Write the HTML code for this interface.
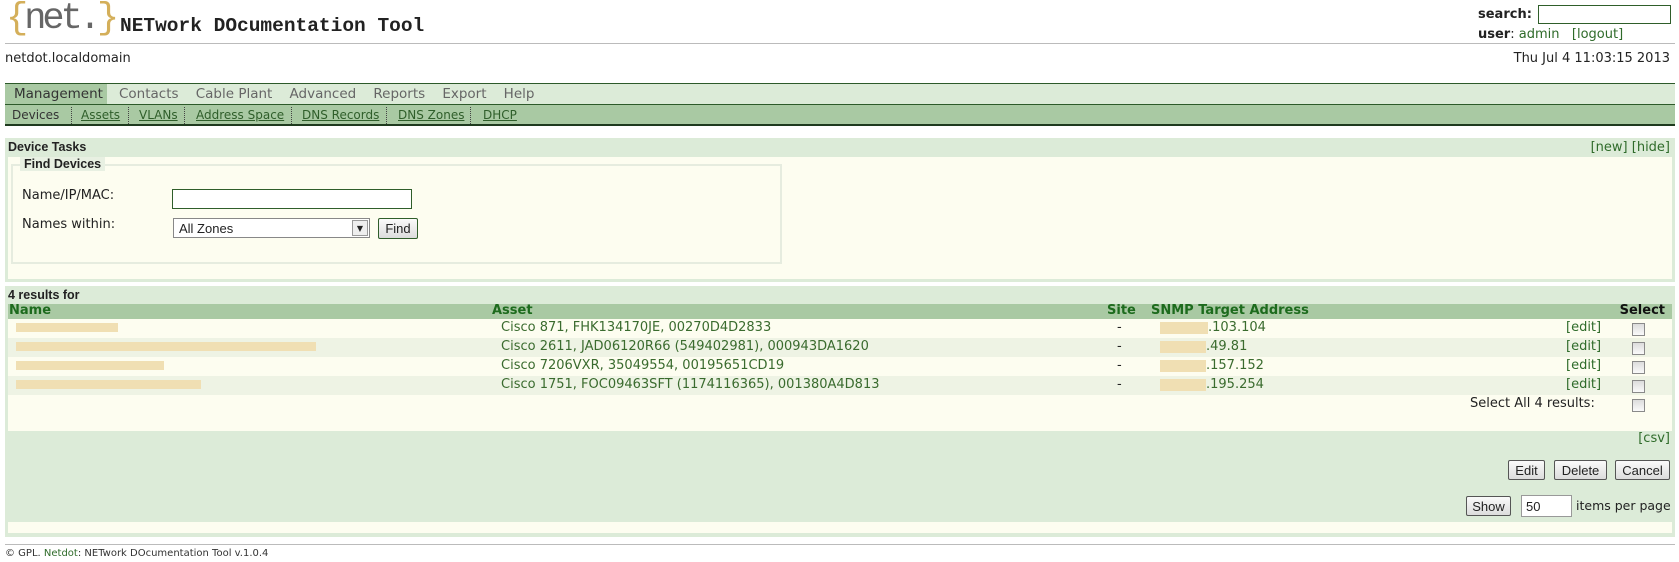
<!DOCTYPE html>
<html><head><meta charset="utf-8"><style>
*{box-sizing:border-box;margin:0;padding:0}
body{width:1679px;height:562px;background:#fff;font-family:"DejaVu Sans",Verdana,sans-serif;font-size:13px;color:#222;position:relative;overflow:hidden}
.a{position:absolute;white-space:nowrap}
.g{color:#3a6b2e}
.lnk{color:#2f6b2a}
.cb{position:absolute;width:13px;height:13px;border:1px solid #8a8a8a;background:linear-gradient(#dcdcdc,#fafafa)}
.btn{position:absolute;border:1px solid #555;border-radius:2px;background:linear-gradient(#fafafa,#dcdcdc);font-family:"Liberation Sans",sans-serif;font-size:13px;text-align:center;line-height:19px}
.blur{position:absolute;background:#f0dfb3;height:9px}
</style></head><body>
<div class="a" style="left:6px;top:-2px;font-family:'Liberation Mono',monospace;font-size:37px;line-height:42px;letter-spacing:-4px;color:#666"><span style="color:#d4af5a">{</span>net.<span style="color:#d4af5a">}</span></div>
<div class="a" style="left:120px;top:15px;font-family:'Liberation Mono',monospace;font-weight:bold;font-size:19.5px;color:#222">NETwork DOcumentation Tool</div>
<div class="a" style="left:1478px;top:7px;font-weight:bold">search:</div>
<div class="a" style="left:1538px;top:5px;width:133px;height:19px;border:1px solid #2f5e2a;background:#fff"></div>
<div class="a" style="left:1478px;top:27px"><b>user</b>: <span class="lnk">admin</span>&nbsp;&nbsp;&nbsp;<span class="lnk">[logout]</span></div>
<div class="a" style="left:5px;top:43px;width:1670px;height:1px;background:#bbb"></div>
<div class="a" style="left:5px;top:51px">netdot.localdomain</div>
<div class="a" style="right:9px;top:51px">Thu Jul 4 11:03:15 2013</div>
<div class="a" style="left:5px;top:83px;width:1670px;height:21px;background:#dcebd8;border-top:1px solid #2d5a2a"></div>
<div class="a" style="left:5px;top:84px;width:102px;height:20px;background:#a9c9a3"></div>
<div class="a" style="left:14px;top:86px;color:#333;font-size:13.5px">Management</div>
<div class="a" style="left:119px;top:86px;color:#666;font-size:13.5px">Contacts&nbsp;&nbsp;&nbsp;&nbsp;Cable Plant&nbsp;&nbsp;&nbsp;&nbsp;Advanced&nbsp;&nbsp;&nbsp;&nbsp;Reports&nbsp;&nbsp;&nbsp;&nbsp;Export&nbsp;&nbsp;&nbsp;&nbsp;Help</div>
<div class="a" style="left:5px;top:104px;width:1670px;height:22px;background:#a9c9a3;border-top:1px solid #2d5a2a;border-bottom:2px solid #1e3a1e"></div>
<div class="a" style="left:12px;top:108px;font-size:12px;color:#333">Devices</div>
<div class="a" style="left:71px;top:107px;width:0;height:17px;border-left:1px dotted #444"></div>
<div class="a" style="left:81px;top:108px;font-size:12px;color:#2f5e2a;text-decoration:underline">Assets</div>
<div class="a" style="left:128px;top:107px;width:0;height:17px;border-left:1px dotted #444"></div>
<div class="a" style="left:139px;top:108px;font-size:12px;color:#2f5e2a;text-decoration:underline">VLANs</div>
<div class="a" style="left:184px;top:107px;width:0;height:17px;border-left:1px dotted #444"></div>
<div class="a" style="left:196px;top:108px;font-size:12px;color:#2f5e2a;text-decoration:underline">Address Space</div>
<div class="a" style="left:291px;top:107px;width:0;height:17px;border-left:1px dotted #444"></div>
<div class="a" style="left:302px;top:108px;font-size:12px;color:#2f5e2a;text-decoration:underline">DNS Records</div>
<div class="a" style="left:386px;top:107px;width:0;height:17px;border-left:1px dotted #444"></div>
<div class="a" style="left:398px;top:108px;font-size:12px;color:#2f5e2a;text-decoration:underline">DNS Zones</div>
<div class="a" style="left:470px;top:107px;width:0;height:17px;border-left:1px dotted #444"></div>
<div class="a" style="left:483px;top:108px;font-size:12px;color:#2f5e2a;text-decoration:underline">DHCP</div>
<div class="a" style="left:5px;top:138px;width:1670px;height:144px;background:#dcebd8"></div>
<div class="a" style="left:8px;top:157px;width:1664px;height:122px;background:#fdfdf0"></div>
<div class="a" style="left:8px;top:140px;font-weight:bold;font-size:12.5px;font-family:'Liberation Sans',Arial,sans-serif">Device Tasks</div>
<div class="a lnk" style="right:9px;top:140px">[new] [hide]</div>
<div class="a" style="left:11px;top:164px;width:771px;height:100px;border:2px solid #e6ecdf"></div>
<div class="a" style="left:20px;top:157px;padding:0 4px;background:#e8f0e2;font-weight:bold;font-size:12.5px;font-family:'Liberation Sans',Arial,sans-serif">Find Devices</div>
<div class="a" style="left:22px;top:188px">Name/IP/MAC:</div>
<div class="a" style="left:172px;top:189px;width:240px;height:20px;border:1px solid #2f5e2a;background:#fff"></div>
<div class="a" style="left:22px;top:217px">Names within:</div>
<div class="a" style="left:173px;top:218px;width:197px;height:20px;border:1px solid #888;background:#fff;font-family:'Liberation Sans',sans-serif;padding:2px 5px">All Zones</div>
<div class="a" style="left:352px;top:220px;width:16px;height:16px;border:1px solid #999;background:#eee;font-size:8px;text-align:center;line-height:15px">▼</div>
<div class="btn" style="left:378px;top:218px;width:40px;height:21px;border-color:#2f5e2a">Find</div>
<div class="a" style="left:5px;top:286px;width:1670px;height:251px;background:#dcebd8"></div>
<div class="a" style="left:8px;top:288px;font-weight:bold;font-size:12.5px;font-family:'Liberation Sans',Arial,sans-serif">4 results for</div>
<div class="a" style="left:8px;top:304px;width:1664px;height:15px;background:#a9c9a3"></div>
<div class="a" style="left:9px;top:303px;font-weight:bold;color:#1d6b1d">Name</div>
<div class="a" style="left:492px;top:303px;font-weight:bold;color:#1d6b1d">Asset</div>
<div class="a" style="left:1107px;top:303px;font-weight:bold;color:#1d6b1d">Site</div>
<div class="a" style="left:1151px;top:303px;font-weight:bold;color:#1d6b1d">SNMP Target Address</div>
<div class="a" style="right:14px;top:303px;font-weight:bold;color:#111">Select</div>
<div class="a" style="left:8px;top:319px;width:1664px;height:112px;background:#fdfdf0"></div>
<div class="a" style="left:8px;top:338px;width:1664px;height:19px;background:#eef3e4"></div>
<div class="a" style="left:8px;top:376px;width:1664px;height:19px;background:#eef3e4"></div>
<div class="blur" style="left:16px;top:323px;width:102px"></div>
<div class="blur" style="left:16px;top:342px;width:300px"></div>
<div class="blur" style="left:16px;top:361px;width:148px"></div>
<div class="blur" style="left:16px;top:380px;width:185px"></div>
<div class="a g" style="left:501px;top:320px">Cisco 871, FHK134170JE, 00270D4D2833</div>
<div class="a g" style="left:501px;top:339px">Cisco 2611, JAD06120R66 (549402981), 000943DA1620</div>
<div class="a g" style="left:501px;top:358px">Cisco 7206VXR, 35049554, 00195651CD19</div>
<div class="a g" style="left:501px;top:377px">Cisco 1751, FOC09463SFT (1174116365), 001380A4D813</div>
<div class="a" style="left:1117px;top:320px">-</div>
<div class="a" style="left:1117px;top:339px">-</div>
<div class="a" style="left:1117px;top:358px">-</div>
<div class="a" style="left:1117px;top:377px">-</div>
<div class="blur" style="left:1160px;top:322px;width:48px;height:12px"></div>
<div class="a g" style="left:1208px;top:320px">.103.104</div>
<div class="blur" style="left:1160px;top:341px;width:46px;height:12px"></div>
<div class="a g" style="left:1206px;top:339px">.49.81</div>
<div class="blur" style="left:1160px;top:360px;width:46px;height:12px"></div>
<div class="a g" style="left:1206px;top:358px">.157.152</div>
<div class="blur" style="left:1160px;top:379px;width:46px;height:12px"></div>
<div class="a g" style="left:1206px;top:377px">.195.254</div>
<div class="a lnk" style="left:1566px;top:320px">[edit]</div>
<div class="a lnk" style="left:1566px;top:339px">[edit]</div>
<div class="a lnk" style="left:1566px;top:358px">[edit]</div>
<div class="a lnk" style="left:1566px;top:377px">[edit]</div>
<div class="cb" style="left:1632px;top:323px"></div>
<div class="cb" style="left:1632px;top:342px"></div>
<div class="cb" style="left:1632px;top:361px"></div>
<div class="cb" style="left:1632px;top:380px"></div>
<div class="a" style="left:1470px;top:396px">Select All 4 results:</div>
<div class="cb" style="left:1632px;top:399px"></div>
<div class="a lnk" style="right:9px;top:431px">[csv]</div>
<div class="btn" style="left:1508px;top:460px;width:37px;height:20px">Edit</div>
<div class="btn" style="left:1554px;top:460px;width:53px;height:20px">Delete</div>
<div class="btn" style="left:1615px;top:460px;width:55px;height:20px">Cancel</div>
<div class="btn" style="left:1466px;top:496px;width:45px;height:20px">Show</div>
<div class="a" style="left:1521px;top:495px;width:51px;height:22px;border:1px solid #999;background:#fff;font-family:'Liberation Sans',sans-serif;padding:3px 4px">50</div>
<div class="a" style="left:1576px;top:498px;font-size:12.5px">items per page</div>
<div class="a" style="left:8px;top:522px;width:1664px;height:11px;background:#fdfdf0"></div>
<div class="a" style="left:5px;top:544px;width:1670px;height:1px;background:#bbb"></div>
<div class="a" style="left:5px;top:548px;font-size:10px;color:#333">© GPL. <span class="lnk">Netdot</span>: NETwork DOcumentation Tool v.1.0.4</div>
</body></html>
